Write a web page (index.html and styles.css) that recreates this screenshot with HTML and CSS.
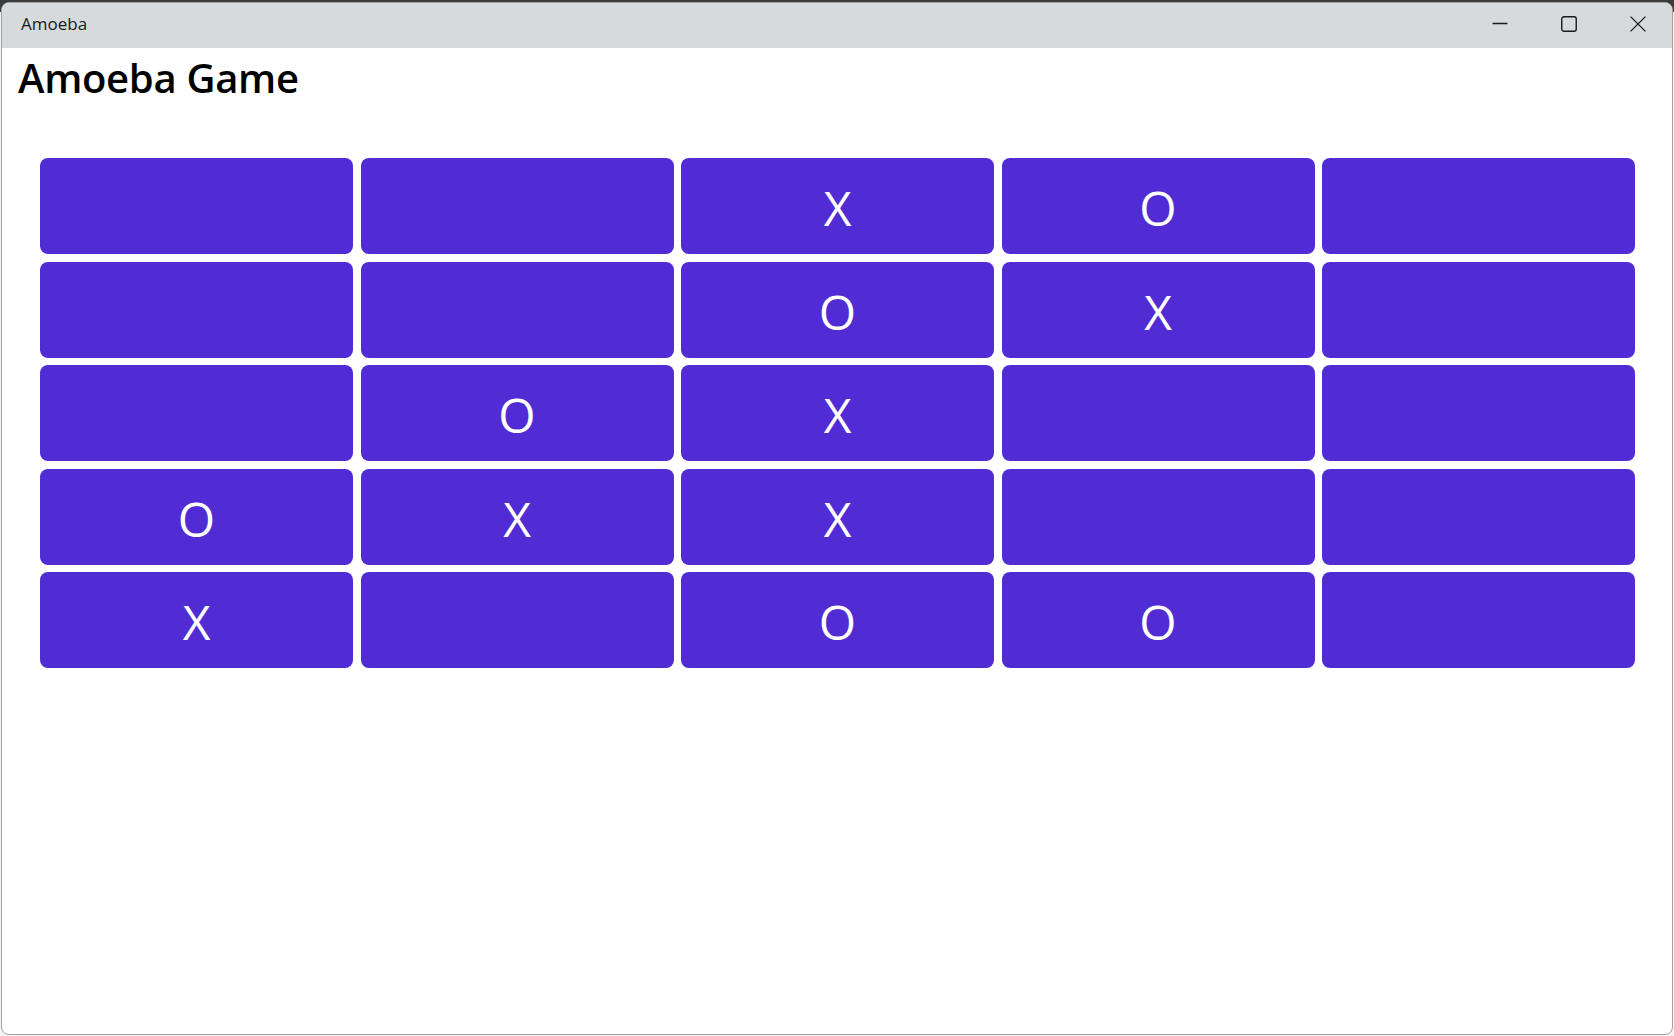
FILE: index.html
```html
<!DOCTYPE html>
<html lang="en">
<head>
<meta charset="utf-8">
<title>Amoeba</title>
<link rel="stylesheet" href="styles.css">
</head>
<body>
<div class="window">
  <header class="titlebar">
    <span class="app-title">Amoeba</span>
    <div class="caption">
      <button class="cap-btn" aria-label="Minimize">
        <svg width="16" height="16" viewBox="0 0 16 16"><path d="M0.5 7.5H15.5" stroke="#1a1a1a" stroke-width="1.4" fill="none"/></svg>
      </button>
      <button class="cap-btn" aria-label="Maximize">
        <svg width="16" height="16" viewBox="0 0 16 16"><rect x="0.75" y="0.75" width="14.5" height="14.5" rx="2.2" stroke="#1a1a1a" stroke-width="1.4" fill="none"/></svg>
      </button>
      <button class="cap-btn" aria-label="Close">
        <svg width="16" height="16" viewBox="0 0 16 16"><path d="M0.6 0.6L15.4 15.4M15.4 0.6L0.6 15.4" stroke="#1a1a1a" stroke-width="1.3" fill="none"/></svg>
      </button>
    </div>
  </header>
  <main class="content">
    <h1 class="heading">Amoeba Game</h1>
    <div class="board">
      <button class="cell"></button>
      <button class="cell"></button>
      <button class="cell">X</button>
      <button class="cell">O</button>
      <button class="cell"></button>

      <button class="cell"></button>
      <button class="cell"></button>
      <button class="cell">O</button>
      <button class="cell">X</button>
      <button class="cell"></button>

      <button class="cell"></button>
      <button class="cell">O</button>
      <button class="cell">X</button>
      <button class="cell"></button>
      <button class="cell"></button>

      <button class="cell">O</button>
      <button class="cell">X</button>
      <button class="cell">X</button>
      <button class="cell"></button>
      <button class="cell"></button>

      <button class="cell">X</button>
      <button class="cell"></button>
      <button class="cell">O</button>
      <button class="cell">O</button>
      <button class="cell"></button>
    </div>
  </main>
</div>
</body>
</html>
```

FILE: styles.css
```css
html, body {
  margin: 0;
  padding: 0;
  height: 100%;
}

body {
  background: linear-gradient(#3a3a3a 0 12px, #f2f2f2 12px);
  font-family: "Open Sans", "Noto Sans", sans-serif;
  box-sizing: border-box;
  padding: 2px 1px 1px 1px;
}

.window {
  box-sizing: border-box;
  width: 1672px;
  height: 1033px;
  border: 1px solid #a3a3a3;
  border-radius: 8px;
  overflow: hidden;
  background: #ffffff;
  display: flex;
  flex-direction: column;
}

.titlebar {
  height: 45px;
  flex: 0 0 45px;
  background: #d6dadd;
  display: flex;
  align-items: flex-start;
  justify-content: space-between;
}

.app-title {
  font-family: "Open Sans", sans-serif;
  font-size: 17px;
  color: #1a1a1a;
  padding-left: 19px;
  line-height: 20px;
  padding-top: 11px;
}

.caption {
  display: flex;
}

.cap-btn {
  width: 69px;
  height: 42px;
  border: 0;
  padding: 0;
  background: transparent;
  display: flex;
  align-items: center;
  justify-content: center;
}

.cap-btn svg {
  display: block;
}

.content {
  flex: 1;
  padding: 0 37px 0 38px;
}

.heading {
  margin: 2px 0 0 -22px;
  font-family: "Open Sans", sans-serif;
  font-weight: 650;
  font-size: 40px;
  line-height: 56px;
  color: #000000;
  letter-spacing: -0.3px;
}

.board {
  margin-top: 52px;
  display: grid;
  grid-template-columns: repeat(5, 313px);
  grid-template-rows: repeat(5, 96px);
  gap: 7.5px;
}

.cell {
  border: 0;
  border-radius: 8px;
  background: #512bd4;
  color: #ffffff;
  font-family: "Open Sans", sans-serif;
  font-weight: 370;
  font-size: 48px;
  line-height: 1;
  padding: 4px 0 0 0;
  display: flex;
  align-items: center;
  justify-content: center;
}
```
